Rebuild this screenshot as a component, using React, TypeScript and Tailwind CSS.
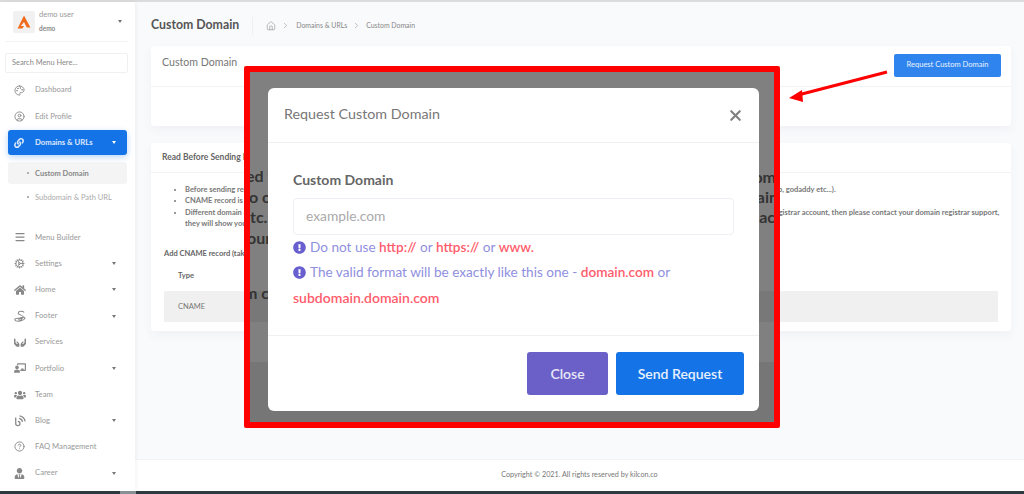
import { Menu, House, ChevronRight, X } from "lucide-react";
import { FaHome, FaUsers, FaUserTie, FaChalkboardTeacher, FaLink, FaExclamationCircle } from "react-icons/fa";
import { FaHandsHolding } from "react-icons/fa6";
import { LuPalette, LuCircleUser, LuCircleHelp, LuCog } from "react-icons/lu";
import type { ReactNode } from "react";

function Caret({ color = "#777" }: { color?: string }) {
  return (
    <span
      className="ml-auto mr-[19px] h-0 w-0 shrink-0 border-x-[2.5px] border-t-[3px] border-x-transparent"
      style={{ borderTopColor: color }}
    />
  );
}

function FooterIcon() {
  return (
    <svg viewBox="0 0 14 14" className="h-[13px] w-[13px]" fill="none" stroke="currentColor" strokeWidth="1.1">
      <path d="M11 2.5 C9 .8 4.5 1 4.5 3.5 C4.5 5.5 10 5 10 7.5 C10 9.5 7 9.5 5 9" />
      <ellipse cx="4.5" cy="10.5" rx="3.6" ry="1.5" />
      <ellipse cx="8.5" cy="9.5" rx="3.4" ry="1.5" transform="rotate(-15 8.5 9.5)" />
    </svg>
  );
}

function BlogIcon() {
  return (
    <svg viewBox="0 0 14 14" className="h-[12px] w-[12px]" fill="none" stroke="currentColor" strokeWidth="1.5">
      <path d="M2 3 V10 A2.5 2.5 0 1 0 4.5 7.5" />
      <path d="M6 4 A5 5 0 0 1 10 8" />
      <path d="M6.5 1 A8 8 0 0 1 13 7.5" />
    </svg>
  );
}

function NavItem({ icon, label, caret }: { icon: ReactNode; label: string; caret?: boolean }) {
  return (
    <div className="flex h-[26.2px] items-center pl-[14px] text-[7.7px] text-[#999]">
      <span className="flex w-[21px] shrink-0 items-center justify-start text-[#888]">{icon}</span>
      <span>{label}</span>
      {caret && <Caret />}
    </div>
  );
}

function Sidebar() {
  return (
    <aside className="z-10 flex w-[135px] shrink-0 flex-col bg-white shadow-[1px_0_4px_rgba(0,0,0,0.05)]">
      <div className="ml-[5px] mr-[7px] flex h-[40px] items-center border-b border-[#f3f3f3] pl-[8px]">
        <div className="flex h-[22px] w-[22px] items-center justify-center rounded-[2px] bg-[#f1f1f1]">
          <svg viewBox="0 0 20 20" className="h-[16px] w-[16px]">
            <path d="M10 2 L18 17 L13.5 17 L10 10 L6 15 L10 15 L8 18 L2 18 Z" fill="#f26a1b" />
          </svg>
        </div>
        <div className="ml-[4px] leading-none">
          <div className="text-[7.5px] text-[#999]">demo user</div>
          <div className="mt-[7px] text-[6.5px] font-bold text-[#888]">demo</div>
        </div>
        <span className="ml-auto mr-[6px] h-0 w-0 border-x-[2.5px] border-t-[3px] border-x-transparent border-t-[#777]" />
      </div>
      <div className="ml-[5px] mr-[7px] mt-[11px] flex h-[20px] items-center rounded-[2px] border border-[#f0f0f0] pl-[6px] text-[7.4px] text-[#888]">
        Search Menu Here...
      </div>
      <div className="mt-[4px]">
        <NavItem icon={<LuPalette size={11} />} label="Dashboard" />
        <NavItem icon={<LuCircleUser size={11} />} label="Edit Profile" />
      </div>
      <div className="mx-[8px] mt-[1px] flex h-[25px] items-center rounded-[3px] bg-[#1473e6] pl-[6px] text-[7.7px] font-bold text-white/85 shadow-[0_2px_6px_rgba(20,115,230,0.3)]">
        <span className="flex w-[21px] items-center">
          <FaLink size={10} />
        </span>
        <span>Domains &amp; URLs</span>
        <span className="ml-auto mr-[11px] h-0 w-0 border-x-[2.5px] border-t-[3px] border-x-transparent border-t-white" />
      </div>
      <div className="mx-[8px] mt-[7px] flex h-[22px] items-center rounded-[3px] bg-[#f4f4f4] pl-[19px] text-[7.5px] font-bold text-[#888]">
        <span className="mr-[6px] h-[2px] w-[2px] rounded-full bg-[#999]" />
        Custom Domain
      </div>
      <div className="mx-[8px] flex h-[26px] items-center pl-[19px] text-[7.5px] text-[#aaa]">
        <span className="mr-[6px] h-[2px] w-[2px] rounded-full bg-[#999]" />
        Subdomain &amp; Path URL
      </div>
      <div className="mt-[14px]">
        <NavItem icon={<Menu size={12} strokeWidth={2.5} />} label="Menu Builder" />
        <NavItem icon={<LuCog size={11} />} label="Settings" caret />
        <NavItem icon={<FaHome size={12} />} label="Home" caret />
        <NavItem icon={<FooterIcon />} label="Footer" caret />
        <NavItem icon={<FaHandsHolding size={12} />} label="Services" />
        <NavItem icon={<FaChalkboardTeacher size={12} />} label="Portfolio" caret />
        <NavItem icon={<FaUsers size={12} />} label="Team" />
        <NavItem icon={<BlogIcon />} label="Blog" caret />
        <NavItem icon={<LuCircleHelp size={11} />} label="FAQ Management" />
        <NavItem icon={<FaUserTie size={11} />} label="Career" caret />
      </div>
    </aside>
  );
}

function Content() {
  return (
    <main className="flex min-w-0 flex-1 flex-col bg-[#f9fafc]">
      <div className="flex-1 pl-[16px] pr-[13px]">
        <div className="flex h-[44px] items-center pt-[3px]">
          <h1 className="text-[12.3px] font-bold text-[#555]">Custom Domain</h1>
          <span className="ml-[13px] h-[18px] w-px bg-[#f0f0f0]" />
          <House size={10} className="ml-[13px] text-[#aaa]" />
          <ChevronRight size={9} className="mx-[5px] text-[#aaa]" />
          <span className="ml-[1px] text-[6.9px] text-[#888]">Domains &amp; URLs</span>
          <ChevronRight size={9} className="mx-[5px] text-[#aaa]" />
          <span className="text-[6.9px] text-[#888]">Custom Domain</span>
        </div>
        <section className="h-[80px] rounded-[3px] bg-white shadow-[0_4px_10px_rgba(60,70,120,0.05)]">
          <div className="flex h-[41px] items-center justify-between border-b border-[#f3f3f3] pl-[11px] pr-[10px]">
            <span className="mb-[6px] text-[10.6px] text-[#777]">Custom Domain</span>
            <button className="mb-[2px] h-[23px] w-[107px] rounded-[2px] bg-[#2f84ee] text-[7.5px] text-white/90">Request Custom Domain</button>
          </div>
        </section>
        <section className="mt-[17px] h-[188px] rounded-[3px] bg-white shadow-[0_4px_10px_rgba(60,70,120,0.05)]">
          <div className="flex h-[30px] items-center border-b border-[#f3f3f3] pl-[11px] text-[8.5px] font-bold text-[#666]">
            Read Before Sending Request
          </div>
          <div className="px-[13px] pt-[11px] text-[7.5px] font-bold leading-[11.3px] text-[#777]">
            <ul className="list-disc whitespace-nowrap pl-[21px]">
              <li>Before sending request for custom domain, make sure you have already purchased the domain name that you want to use from any domain registrar of your own choice (namecheap, godaddy etc...).</li>
              <li>CNAME record is required to point your own domain to our server from your domain registrar panel.</li>
              <li>Different domain registrars have different processes for adding CNAME records to domain names inside their own control panels, if you cannot add the record from your domain registrar account, then please contact your domain registrar support,<br />they will show you how to add it.</li>
            </ul>
            <p className="mt-[19px] text-[#666]">Add CNAME record (take help from your domain registrar)</p>
            <div className="mt-[3px] flex h-[26px] items-center pl-[14px] text-[#666]">Type</div>
            <div className="mt-[3px] flex h-[31px] items-center bg-[#f0f0f0] pl-[14px] font-normal text-[#777]">CNAME</div>
          </div>
        </section>
      </div>
      <footer className="flex h-[32px] items-center justify-center border-t border-[#f3f3f3] bg-white text-[7.2px] text-[#777]">
        Copyright © 2021. All rights reserved by kilcon.co
      </footer>
    </main>
  );
}

function Hint({ children }: { children: ReactNode }) {
  return (
    <p className="text-[13.6px] leading-[25px] text-[#8f8fe0]">
      <FaExclamationCircle size={13} className="mr-[4px] inline align-[-2px] text-[#6a5fcf]" />
      {children}
    </p>
  );
}

function Red({ children }: { children: ReactNode }) {
  return <span className="font-semibold text-[#ff5c6c]">{children}</span>;
}

function Frame() {
  return (
    <div className="absolute left-[244px] top-[66px] h-[362px] w-[536px] overflow-hidden rounded-[2px] border-[6px] border-[#ff0000] bg-[#808080] pl-[18px] pt-[16px]">
      <div className="absolute bottom-0 left-0 right-0 h-[60px] bg-[#767676]" />
      <div className="absolute left-0 right-0 top-[219px] h-[31px] bg-[#787878]" />
      <span className="absolute left-[-4px] top-[92px] text-[16px] font-bold text-[#333]">ed t</span>
      <span className="absolute left-[-1px] top-[113px] text-[16px] font-bold text-[#333]">o o</span>
      <span className="absolute left-[0px] top-[133px] text-[16px] font-bold text-[#333]">tc...</span>
      <span className="absolute left-[-3px] top-[154px] text-[16px] font-bold text-[#333]">our</span>
      <span className="absolute left-[-6px] top-[209px] text-[16px] font-bold text-[#333]">m c</span>
      <span className="absolute right-[-2px] top-[93px] text-[16px] font-bold text-[#333]">om</span>
      <span className="absolute right-[-4px] top-[113px] text-[16px] font-bold text-[#333]">ain</span>
      <span className="absolute right-[-1px] top-[133px] text-[16px] font-bold text-[#333]">ac</span>
      <div className="relative flex h-[323px] w-[491px] flex-col rounded-[6px] bg-white">
        <div className="flex h-[55px] items-center justify-between border-b border-[#f0f0f0] pl-[16px] pr-[15px]">
          <span className="mb-[2px] text-[14.3px] text-[#777]">Request Custom Domain</span>
          <X size={17} strokeWidth={3} className="text-[#808080]" />
        </div>
        <div className="h-[193px] border-b border-[#f0f0f0] px-[25px] pt-[28px]">
          <div className="text-[14px] font-bold leading-[18px] text-[#666]">Custom Domain</div>
          <div className="mt-[9px] flex h-[37px] w-[441px] items-center rounded-[4px] border border-[#eeeef4] pl-[12px] text-[13.8px] text-[#aaa]">
            example.com
          </div>
          <div>
            <Hint>
              Do not use <Red>http://</Red> or <Red>https://</Red> or <Red>www.</Red>
            </Hint>
            <Hint>
              The valid format will be exactly like this one - <Red>domain.com</Red> or
            </Hint>
            <p className="text-[14px] leading-[25px]">
              <Red>subdomain.domain.com</Red>
            </p>
          </div>
        </div>
        <div className="flex flex-1 items-start justify-end gap-[8px] pr-[15px] pt-[16px]">
          <button className="h-[43px] w-[81px] rounded-[3px] bg-[#6a60c8] text-[14px] font-semibold text-white/85">Close</button>
          <button className="h-[43px] w-[128px] rounded-[3px] bg-[#1473e6] text-[14px] font-semibold text-white/90">Send Request</button>
        </div>
      </div>
    </div>
  );
}

function Arrow() {
  return (
    <svg viewBox="0 0 110 40" className="absolute left-[782px] top-[66px] h-[40px] w-[110px]">
      <line x1="105" y1="6" x2="16" y2="29" stroke="#ff0000" strokeWidth="3" />
      <path d="M7 32 L20 24 L21 36 Z" fill="#ff0000" />
    </svg>
  );
}

export default function App() {
  return (
    <div className="relative flex h-[494px] w-[1024px] flex-col overflow-hidden bg-white [font-family:Lato,sans-serif]">
      <div className="h-[2px] shrink-0 bg-[#dcdcdc]" />
      <div className="flex min-h-0 flex-1">
        <Sidebar />
        <Content />
      </div>
      <div className="flex h-[3px] shrink-0 bg-[#2e3a40]">
        <span className="ml-[120px] w-[16px] bg-[#8a9296]" />
      </div>
      <Frame />
      <Arrow />
    </div>
  );
}
